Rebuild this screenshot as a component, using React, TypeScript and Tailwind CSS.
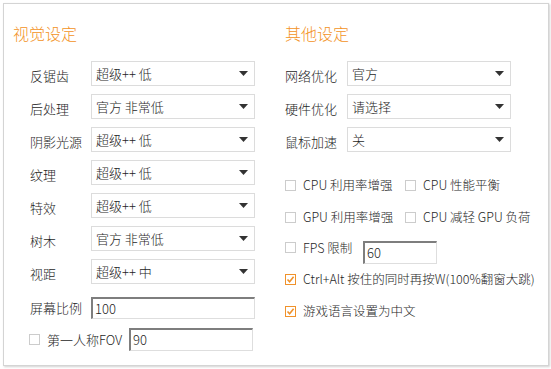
import React from "react";

const font = { fontFamily: '"Noto Sans CJK SC", "Noto Sans", sans-serif' };

function Caret() {
  return (
    <svg width="9" height="5" viewBox="0 0 9 5" className="shrink-0">
      <path d="M0 0 H9 L4.5 5 Z" fill="#333" />
    </svg>
  );
}

function Select({ value }: { value: string }) {
  return (
    <div className="w-[164px] h-[25px] border border-[#dcdcdc] bg-white flex items-center justify-between pl-[4px] pr-[6px] text-[13px] text-[#1e1e1e]">
      <span className="leading-[20px]">{value}</span>
      <Caret />
    </div>
  );
}

function Input({ value, w, h }: { value: string; w: string; h: string }) {
  return (
    <div
      className={`${w} ${h} border-t-2 border-l-2 border-r border-b border-t-[#7e7e7e] border-l-[#7e7e7e] border-r-[#dedede] border-b-[#dedede] bg-white flex items-center pl-[2px] text-[13px] text-[#1e1e1e]`}
    >
      {value}
    </div>
  );
}

function Check({ checked }: { checked?: boolean }) {
  return checked ? (
    <div className="w-[11px] h-[11px] border border-[#f0922b] bg-white flex items-center justify-center shrink-0">
      <svg width="9" height="9" viewBox="0 0 9 9">
        <path d="M1.5 4.5 L3.6 6.7 L7.6 1.8" stroke="#f0922b" strokeWidth="1.6" fill="none" />
      </svg>
    </div>
  ) : (
    <div className="w-[11px] h-[11px] border border-[#cccccc] bg-white shrink-0" />
  );
}

function CheckItem({ label, checked, className = "" }: { label: string; checked?: boolean; className?: string }) {
  return (
    <div className={`flex items-center ${className}`}>
      <Check checked={checked} />
      <span className="ml-[7px] text-[12.5px] text-[#1e1e1e] leading-[20px] whitespace-nowrap">{label}</span>
    </div>
  );
}

function SelectRow({ label, value, lw }: { label: string; value: string; lw: string }) {
  return (
    <div className="flex items-center h-[25px]">
      <span className={`${lw} text-[13px] text-[#1e1e1e] pt-[5px] leading-[20px]`}>{label}</span>
      <Select value={value} />
    </div>
  );
}

export default function App() {
  const left = [
    ["反锯齿", "超级++ 低"],
    ["后处理", "官方 非常低"],
    ["阴影光源", "超级++ 低"],
    ["纹理", "超级++ 低"],
    ["特效", "超级++ 低"],
    ["树木", "官方 非常低"],
    ["视距", "超级++ 中"],
  ];
  const right = [
    ["网络优化", "官方"],
    ["硬件优化", "请选择"],
    ["鼠标加速", "关"],
  ];
  return (
    <div className="w-[551px] h-[369px] bg-white p-[3px] font-light" style={font}>
      <div className="w-[546px] h-[363px] border border-[#d4d4d4] shadow-[1px_1px_2px_rgba(0,0,0,0.18)] bg-white flex">
        <div className="w-[272px] pl-[9px] pt-[18px] flex flex-col">
          <div className="h-[22px] leading-[22px] text-[16px] text-[#f39225]">视觉设定</div>
          <div className="mt-[17px] pl-[17px] flex flex-col gap-[8px]">
            {left.map(([l, v]) => (
              <SelectRow key={l} label={l} value={v} lw="w-[61px]" />
            ))}
          </div>
          <div className="mt-[13px] pl-[17px] flex items-center">
            <span className="w-[61px] text-[13px] text-[#1e1e1e] leading-[20px]">屏幕比例</span>
            <Input value="100" w="w-[164px]" h="h-[22px]" />
          </div>
          <div className="mt-[9px] pl-[16px] flex items-center">
            <Check />
            <span className="ml-[7px] w-[82px] text-[13px] text-[#1e1e1e] leading-[20px]">第一人称FOV</span>
            <Input value="90" w="w-[124px]" h="h-[23px]" />
          </div>
        </div>
        <div className="flex-1 pl-[9px] pt-[18px] flex flex-col">
          <div className="h-[22px] leading-[22px] text-[16px] text-[#f39225]">其他设定</div>
          <div className="mt-[17px] flex flex-col gap-[8px]">
            {right.map(([l, v]) => (
              <SelectRow key={l} label={l} value={v} lw="w-[62px]" />
            ))}
          </div>
          <div className="mt-[23px] flex h-[20px]">
            <CheckItem label="CPU 利用率增强" className="w-[120px]" />
            <CheckItem label="CPU 性能平衡" />
          </div>
          <div className="mt-[12px] flex h-[20px]">
            <CheckItem label="GPU 利用率增强" className="w-[120px]" />
            <CheckItem label="CPU 减轻 GPU 负荷" />
          </div>
          <div className="mt-[14px] flex items-start h-[23px]">
            <div className="flex items-center h-[13px] w-[78px]">
              <Check />
              <span className="ml-[7px] text-[12.5px] text-[#1e1e1e] leading-[13px]">FPS 限制</span>
            </div>
            <Input value="60" w="w-[74px]" h="h-[23px]" />
          </div>
          <div className="mt-[5px] flex h-[20px]">
            <CheckItem label="Ctrl+Alt 按住的同时再按W(100%翻窗大跳)" checked />
          </div>
          <div className="mt-[12px] flex h-[20px]">
            <CheckItem label="游戏语言设置为中文" checked />
          </div>
        </div>
      </div>
    </div>
  );
}
